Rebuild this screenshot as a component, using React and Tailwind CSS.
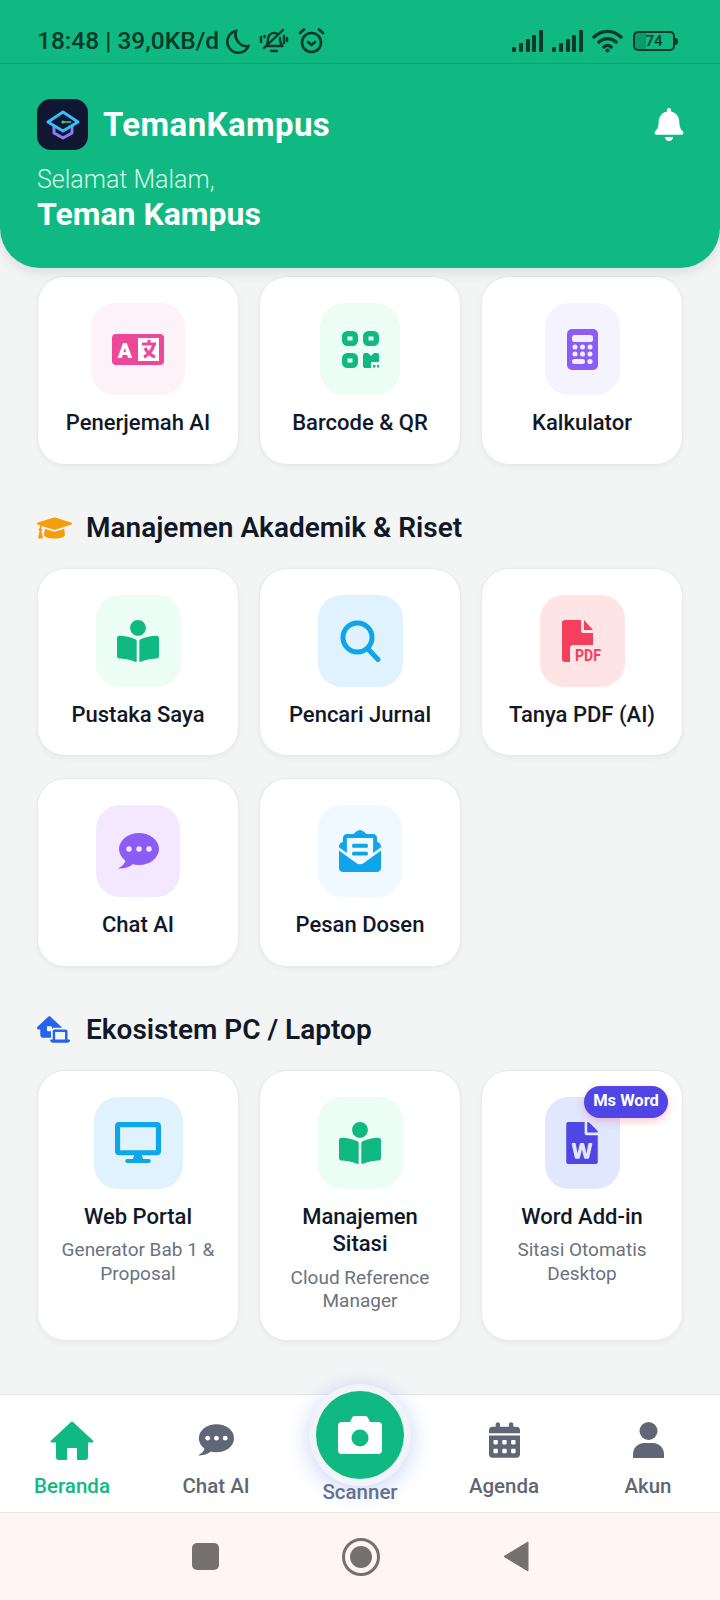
import React from 'react';
import { FaBell, FaBookReader, FaDesktop, FaEnvelopeOpenText, FaFileWord, FaGraduationCap } from 'react-icons/fa';
import { FaCalendarDays, FaHouseLaptop } from 'react-icons/fa6';

const font = { fontFamily: 'Roboto, sans-serif' };

function LogoMark() {
  return (
    <div className="w-[51px] h-[51px] rounded-[14px] bg-[#111633] flex items-center justify-center">
      <svg width="34" height="34" viewBox="0 0 34 34" fill="none">
        <path d="M8 17v8l9 5 9-5v-8" stroke="#8b7cf6" strokeWidth="3" strokeLinejoin="round" />
        <path d="M17 4 32 14 17 23 2 14Z" stroke="#38bdf8" strokeWidth="3" strokeLinejoin="round" fill="#111633" />
        <path d="M17 14h8" stroke="#34d399" strokeWidth="1.5" />
        <circle cx="17" cy="14" r="1.6" fill="#34d399" />
      </svg>
    </div>
  );
}

function TranslateIcon() {
  return (
    <svg width="52" height="31" viewBox="0 0 52 31">
      <rect width="52" height="31" rx="4" fill="#ec4899" />
      <rect x="26" y="4" width="21" height="23" fill="#fff" />
      <text x="13" y="24" textAnchor="middle" fontSize="21" fontWeight="900" fill="#fff" fontFamily="Roboto, sans-serif">A</text>
      <path d="M30 10h14M37 6v4M42 10c-1 6-6 11-10 13M33 14c2 4 5 7 10 9" stroke="#ec4899" strokeWidth="3.2" fill="none" />
    </svg>
  );
}

function QrIcon() {
  const finder = [[0, 0], [21, 0], [0, 22]];
  return (
    <svg width="37" height="37" viewBox="0 0 37 37" fill="#10b981">
      {finder.map(([x, y]) => (
        <rect key={`${x}-${y}`} x={x + 2.75} y={y + 2.75} width="10.5" height="9.5" rx="2.5" fill="none" stroke="#10b981" strokeWidth="5.5" />
      ))}
      <path d="M21 24a2 2 0 0 1 2-2h3l3 3 3-3h3a2 2 0 0 1 2 2v7h-8v6h-6a2 2 0 0 1-2-2Z" />
      <rect x="31" y="34" width="2.500" height="2.500" />
      <rect x="35" y="34" width="2.500" height="2.500" />
    </svg>
  );
}

function CalculatorIcon() {
  return (
    <svg width="31" height="41" viewBox="0 0 31 41">
      <rect width="31" height="41" rx="5" fill="#8b5cf6" />
      <rect x="5" y="6" width="21" height="7" rx="2.5" fill="#f3effe" />
      {[18, 25].map((y) => [8, 15.5, 23].map((x) => <circle key={`${x}-${y}`} cx={x} cy={y} r="2.5" fill="#f3effe" />))}
      <rect x="5" y="30" width="13" height="5" rx="2.5" fill="#f3effe" />
      <circle cx="23" cy="32.5" r="2.6" fill="#f3effe" />
    </svg>
  );
}

function SearchIcon() {
  return (
    <svg width="41" height="42" viewBox="0 0 41 42" fill="none" stroke="#0ea5e9" strokeWidth="5" strokeLinecap="round">
      <circle cx="17.5" cy="17.5" r="14.5" />
      <path d="M28 29 38 39.5" />
    </svg>
  );
}

function PdfIcon() {
  return (
    <svg width="40" height="42" viewBox="0 0 40 42" className="overflow-visible">
      <path d="M3 0h16v11a2 2 0 0 0 2 2h10v12H11a3 3 0 0 0-3 3v14H3a3 3 0 0 1-3-3V3a3 3 0 0 1 3-3Z" fill="#f43f5e" />
      <path d="M22 0l9 10h-9Z" fill="#f43f5e" />
      <text x="13" y="41" fontSize="16" fontWeight="700" fill="#f43f5e" fontFamily="Roboto, sans-serif" textLength="26" lengthAdjust="spacingAndGlyphs">PDF</text>
    </svg>
  );
}

function ChatIcon({ w, h, color, dots }) {
  return (
    <svg width={w} height={h} viewBox="0 0 41 36">
      <ellipse cx="21" cy="16" rx="20" ry="16" fill={color} />
      <path d="M8 25C8 29 5 33 0 35.500C6 36 12 34 16 30Z" fill={color} />
      {[11, 21, 31].map((x) => <circle key={x} cx={x} cy="16" r="2.700" fill={dots} />)}
    </svg>
  );
}

function HomeIcon() {
  return (
    <svg width="44" height="39" viewBox="0 0 44 39" fill="#10b981">
      <path d="M22 1.500 42.500 20.500H37V36a2 2 0 0 1-2 2h-7V27a1 1 0 0 0-1-1H17a1 1 0 0 0-1 1v11H9a2 2 0 0 1-2-2V20.500H1.500Z" stroke="#10b981" strokeWidth="2" strokeLinejoin="round" />
    </svg>
  );
}

function CameraIcon() {
  return (
    <svg width="44" height="38" viewBox="0 0 44 38">
      <path d="M4 6h8l2-4a3 3 0 0 1 3-2h10a3 3 0 0 1 3 2l2 4h8a4 4 0 0 1 4 4v24a4 4 0 0 1-4 4H4a4 4 0 0 1-4-4V10a4 4 0 0 1 4-4Z" fill="#fff" />
      <circle cx="22" cy="22" r="8.500" fill="#10b981" />
    </svg>
  );
}

function PersonIcon() {
  return (
    <svg width="31" height="36" viewBox="0 0 31 36" fill="#5f6675">
      <circle cx="15.5" cy="9" r="9" />
      <path d="M0 36v-4c0-6 5-11 11-11h9c6 0 11 5 11 11v4Z" />
    </svg>
  );
}

function StatusIcons() {
  return (
    <div className="flex items-center ml-[7px] gap-[9px]">
      <svg width="24" height="25" viewBox="0 0 24 25" fill="none" stroke="#07392b" strokeWidth="2.6" strokeLinecap="round">
        <path d="M10 2a11 11 0 1 0 12.500 15C15 18.500 7.500 11 10 2Z" />
      </svg>
      <svg width="30" height="26" viewBox="0 0 30 26" fill="none" stroke="#07392b" strokeWidth="2.4" strokeLinecap="round" strokeLinejoin="round">
        <path d="M7 18c2-2 2-4 2-7a6 6 0 0 1 10-4.500M21 10v2c0 3 1 4 2.500 6H7M12 23h6M5 20 24 2M2 9v5M5.500 8v1M25 8v7M28 10v3" />
      </svg>
      <svg width="27" height="26" viewBox="0 0 27 26" fill="none" stroke="#07392b" strokeWidth="2.6" strokeLinecap="round" strokeLinejoin="round">
        <circle cx="13.500" cy="14.500" r="9.500" />
        <path d="M10 14l3.500 3 3.500-3M2 5l4-3.500M25 5l-4-3.500" />
      </svg>
    </div>
  );
}

function SignalBars() {
  return (
    <svg width="31" height="22" viewBox="0 0 31 22" fill="#07392b">
      <rect x="0" y="17" width="4" height="5" rx="1" />
      <rect x="7" y="13" width="4" height="9" rx="1" />
      <rect x="14" y="9" width="4" height="13" rx="1" />
      <rect x="20" y="5" width="4" height="17" rx="1" />
      <rect x="27" y="0" width="4" height="22" rx="1" />
    </svg>
  );
}

function StatusBar() {
  return (
    <div className="h-[64px] pt-[25px] pl-[37px] pr-[42px] flex items-start justify-between border-b border-[#0d9f70] text-[#07392b]">
      <div className="flex items-center h-[32px]">
        <span className="text-[24.5px] leading-[32px] font-medium whitespace-nowrap">18:48 | 39,0KB/d</span>
        <StatusIcons />
      </div>
      <div className="flex items-center h-[32px] gap-[9px]">
        <SignalBars />
        <SignalBars />
        <svg width="31" height="24" viewBox="0 0 31 24" fill="none" stroke="#07392b" strokeWidth="3.4" strokeLinecap="round">
          <path d="M2 8c8-7.500 19-7.500 27 0M7 13c5-4.500 12-4.500 17 0M12 18c2-2 5-2 7 0" />
          <circle cx="15.500" cy="21.500" r="2" fill="#07392b" stroke="none" />
        </svg>
        <div className="flex items-center ml-[1px]">
          <div className="w-[42px] h-[20px] border-2 border-[#07392b] rounded-[5px] flex items-center justify-center text-[15px] leading-none font-medium bg-[linear-gradient(90deg,#0c9a6d_30%,transparent_30%)]">74</div>
          <div className="w-[3px] h-[7px] bg-[#07392b] rounded-r-sm" />
        </div>
      </div>
    </div>
  );
}

function Header() {
  return (
    <header className="relative z-10 h-[268px] shrink-0 bg-[#10b981] rounded-b-[40px] shadow-[0_4px_12px_rgba(16,60,40,0.12)]">
      <StatusBar />
      <div className="pt-[35px] px-[37px]">
        <div className="flex items-center justify-between">
          <div className="flex items-center gap-[15px]">
            <LogoMark />
            <span className="text-[33px] leading-[36px] font-bold text-white tracking-[0.4px]">TemanKampus</span>
          </div>
          <FaBell className="text-white mr-[-1px] w-[30px] h-[33px]" />
        </div>
        <p className="mt-[14px] text-[25px] leading-[32px] font-light text-[#d9f7ea]">Selamat Malam,</p>
        <p className="-mt-[1px] text-[32px] leading-[38px] font-bold text-white">Teman Kampus</p>
      </div>
    </header>
  );
}

function FeatureCard({ label, sub, boxClass, icon, badge }) {
  return (
    <div className="relative bg-white border border-[#e8eaea] rounded-[28px] shadow-[0_2px_5px_rgba(15,23,42,0.05)] pt-[26px] pb-[27px] px-[16px] flex flex-col items-center text-center">
      <div className={`h-[92px] rounded-[24px] flex items-center justify-center ${boxClass}`}>{icon}</div>
      <div className="mt-[14px] text-[22px] leading-[27.5px] font-medium text-[#111827]">{label}</div>
      {sub && <div className="mt-[8px] text-[19px] leading-[23.5px] text-[#6b7280]">{sub}</div>}
      {badge && (
        <span className="absolute top-[15px] right-[14px] w-[84px] h-[32px] rounded-full bg-[#4f46e5] text-white text-[16.5px] font-bold flex items-center justify-center shadow-[0_3px_8px_rgba(244,63,94,0.3)]">
          {badge}
        </span>
      )}
    </div>
  );
}

function SectionTitle({ icon, children }) {
  return (
    <div className="flex items-center h-[38px] mt-[44px] mb-[21px]">
      <div className="w-[49px] flex items-center">{icon}</div>
      <h2 className="text-[28px] leading-[38px] font-semibold text-[#111827]">{children}</h2>
    </div>
  );
}

function NavItem({ label, icon, active }) {
  return (
    <div className="flex flex-col items-center pt-[25px]">
      <div className="h-[40px] flex items-center justify-center">{icon}</div>
      <span className={`mt-[14px] text-[20.5px] leading-[24px] font-medium ${active ? 'text-[#10b981]' : 'text-[#5f6675]'}`}>{label}</span>
    </div>
  );
}

function BottomNav() {
  return (
    <nav className="relative z-10 h-[119px] shrink-0 bg-white border-t border-[#e6e8e8] border-b grid grid-cols-5">
      <NavItem active label="Beranda" icon={<HomeIcon />} />
      <NavItem label="Chat AI" icon={<ChatIcon w={36} h={32} color="#5f6675" dots="#fff" />} />
      <div className="relative flex flex-col items-center">
        <div className="absolute top-[-11px] w-[102px] h-[102px] rounded-full bg-[#f1f4f6] flex items-center justify-center shadow-[0_4px_22px_rgba(59,100,246,0.28)]">
          <div className="w-[88px] h-[88px] rounded-full bg-[#10b981] flex items-center justify-center">
            <CameraIcon />
          </div>
        </div>
        <span className="relative mt-[85px] text-[20.5px] leading-[24px] font-medium text-[#64708c]">Scanner</span>
      </div>
      <NavItem label="Agenda" icon={<FaCalendarDays className="text-[#5f6675] w-[31px] h-[36px]" />} />
      <NavItem label="Akun" icon={<PersonIcon />} />
    </nav>
  );
}

function SystemNav() {
  return (
    <div className="h-[87px] shrink-0 bg-[#fff6f4] flex items-center justify-center gap-[123px]">
      <div className="w-[27px] h-[27px] rounded-[5px] bg-[#767171]" />
      <div className="w-[38px] h-[38px] rounded-full border-[3px] border-[#767171] flex items-center justify-center">
        <div className="w-[22px] h-[22px] rounded-full bg-[#767171]" />
      </div>
      <svg width="26" height="31" viewBox="0 0 26 31" fill="#767171"><path d="M25 1 1 15.500 25 30Z" stroke="#767171" strokeLinejoin="round" /></svg>
    </div>
  );
}

export default function App() {
  return (
    <div className="w-[720px] h-[1600px] flex flex-col overflow-hidden bg-[#f3f5f5]" style={font}>
      <Header />
      <main className="flex-1 overflow-hidden pt-[8px] px-[37px]">
        <div className="grid grid-cols-3 gap-x-[20px]">
          <FeatureCard label="Penerjemah AI" boxClass="w-[94px] bg-[#fdf2f8]" icon={<TranslateIcon />} />
          <FeatureCard label="Barcode & QR" boxClass="w-[80px] bg-[#ecfdf5]" icon={<QrIcon />} />
          <FeatureCard label="Kalkulator" boxClass="w-[75px] bg-[#f5f3ff]" icon={<CalculatorIcon />} />
        </div>

        <SectionTitle icon={<FaGraduationCap className="text-[#f59e0b] w-[35px] h-[28px]" />}>Manajemen Akademik &amp; Riset</SectionTitle>
        <div className="grid grid-cols-3 gap-x-[20px] gap-y-[22px]">
          <FeatureCard label="Pustaka Saya" boxClass="w-[85px] bg-[#ecfdf5]" icon={<FaBookReader className="text-[#10b981] w-[42px] h-[42px]" />} />
          <FeatureCard label="Pencari Jurnal" boxClass="w-[85px] bg-[#e0f2fe]" icon={<SearchIcon />} />
          <FeatureCard label="Tanya PDF (AI)" boxClass="w-[85px] bg-[#ffe4e6]" icon={<PdfIcon />} />
          <FeatureCard label="Chat AI" boxClass="w-[84px] bg-[#f3e8ff]" icon={<ChatIcon w={41} h={36} color="#8b5cf6" dots="#f3e8ff" />} />
          <FeatureCard label="Pesan Dosen" boxClass="w-[84px] bg-[#f0f9ff]" icon={<FaEnvelopeOpenText className="text-[#0ea5e9] w-[42px] h-[42px]" />} />
        </div>

        <SectionTitle icon={<FaHouseLaptop className="text-[#2563eb] w-[33px] h-[27px]" />}>Ekosistem PC / Laptop</SectionTitle>
        <div className="grid grid-cols-3 gap-x-[20px]">
          <FeatureCard label="Web Portal" sub="Generator Bab 1 & Proposal" boxClass="w-[89px] bg-[#e0f2fe]" icon={<FaDesktop className="text-[#0ea5e9] w-[46px] h-[41px]" />} />
          <FeatureCard label="Manajemen Sitasi" sub="Cloud Reference Manager" boxClass="w-[85px] bg-[#ecfdf5]" icon={<FaBookReader className="text-[#10b981] w-[42px] h-[42px]" />} />
          <FeatureCard label="Word Add-in" sub="Sitasi Otomatis Desktop" badge="Ms Word" boxClass="w-[75px] bg-[#e0e7ff]" icon={<FaFileWord className="text-[#4f46e5] w-[32px] h-[42px]" />} />
        </div>
      </main>
      <BottomNav />
      <SystemNav />
    </div>
  );
}
